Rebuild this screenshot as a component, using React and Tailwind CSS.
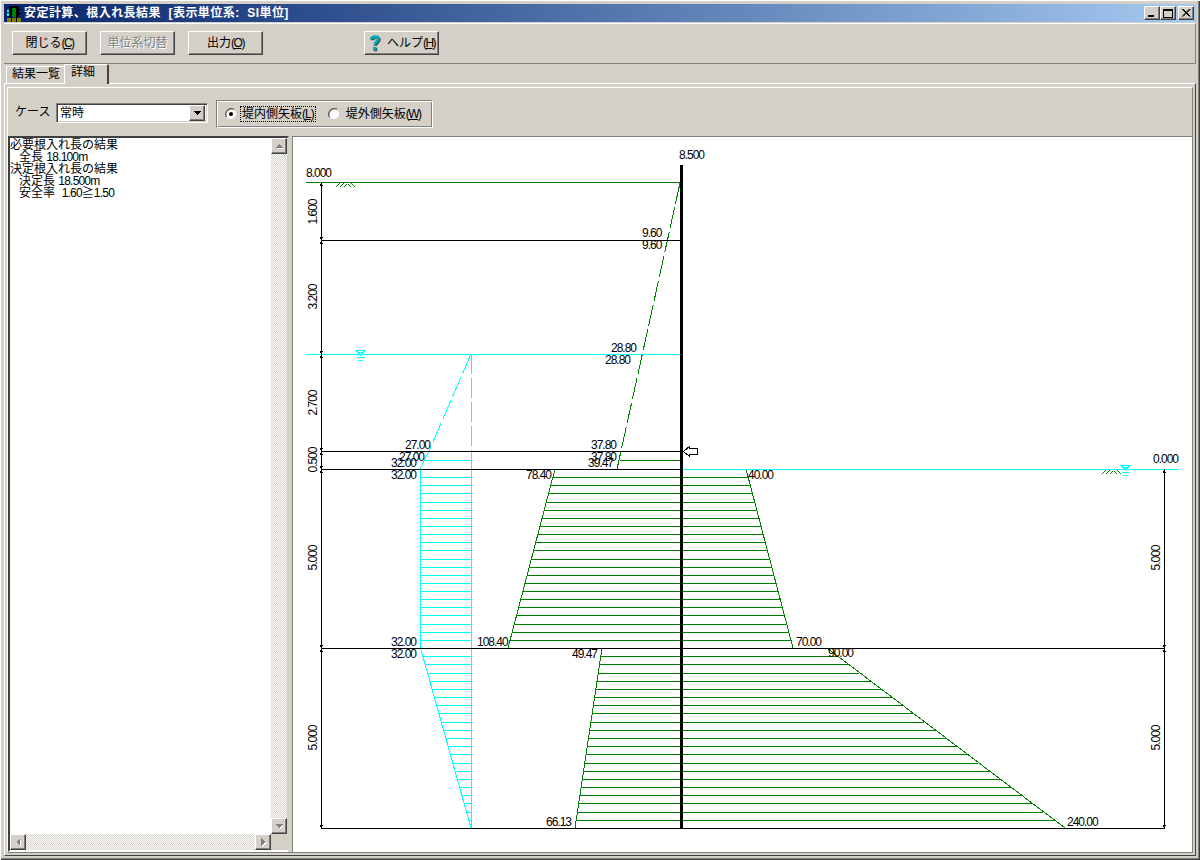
import React from "react";

const jp = "font-['Liberation_Sans','Noto_Sans_CJK_JP',sans-serif]";
const raised = "border border-t-white border-l-white border-r-[#404040] border-b-[#404040] shadow-[inset_-1px_-1px_0_#808080] bg-[#d4d0c8]";
const GREEN = "#008000";
const CYAN = "#00ffff";

function Btn({ label, hot, disabled, className = "", children }) {
  return (
    <button className={`h-6 flex items-center justify-center text-[12px] leading-none ${raised} ${disabled ? "text-[#808080] [text-shadow:1px_1px_0_#ffffff]" : "text-black"} ${className}`}>
      {children}
      {label}
      {hot && (
        <span className="tracking-[-1.5px]">
          (<span className="underline">{hot}</span>)
        </span>
      )}
    </button>
  );
}

function Tri({ dir, color = "#000", shadow }) {
  const pts = {
    up: "0,6 4,2 8,6",
    down: "0,2 8,2 4,6",
    left: "6,0 6,8 2,4",
    right: "2,0 2,8 6,4",
  }[dir];
  return (
    <svg width="8" height="8" viewBox="0 0 8 8" shapeRendering="crispEdges" className="block">
      {shadow && <polygon points={pts} fill={shadow} transform="translate(1,1)" />}
      <polygon points={pts} fill={color} />
    </svg>
  );
}

function SB({ dir, className = "" }) {
  return (
    <div className={`w-4 h-4 shrink-0 flex items-center justify-center ${raised} ${className}`}>
      <Tri dir={dir} color="#808080" shadow="#ffffff" />
    </div>
  );
}

const dither = "bg-[repeating-conic-gradient(#ffffff_0_25%,#d4d0c8_0_50%)] bg-size-[2px_2px]";

function Radio({ checked }) {
  return (
    <svg width="12" height="12" viewBox="0 0 12 12" className="block shrink-0">
      <circle cx="6" cy="6" r="5.5" fill="#fff" stroke="#d4d0c8" />
      <path d="M1.5 9 A5.5 5.5 0 0 1 9 1.5" fill="none" stroke="#606060" strokeWidth="1.4" />
      {checked && <circle cx="6" cy="6" r="2" fill="#000" />}
    </svg>
  );
}

function HelpIcon() {
  return (
    <svg width="14" height="18" viewBox="0 0 14 18" className="block mr-[5px]">
      <path d="M3.5 5.5 C3.5 2.5 10.5 1.5 10.5 5 C10.5 7.5 6.8 7.5 6.8 11" fill="none" stroke="#404040" strokeWidth="3" transform="translate(0.8,0.8)" />
      <rect x="5.8" y="13.8" width="3.4" height="3.4" fill="#404040" />
      <path d="M3.5 5.5 C3.5 2.5 10.5 1.5 10.5 5 C10.5 7.5 6.8 7.5 6.8 11" fill="none" stroke="#00a8b8" strokeWidth="3" />
      <rect x="5" y="13" width="3.4" height="3.4" fill="#00a8b8" />
    </svg>
  );
}

function AppIcon() {
  return (
    <svg width="14" height="16" viewBox="0 0 14 16" shapeRendering="crispEdges" className="block">
      <rect x="2" y="0" width="10" height="11" fill="#000" />
      <rect x="5" y="2" width="4" height="9" fill="#008000" />
      <rect x="0" y="4" width="2" height="2" fill="#00ffff" />
      <rect x="0" y="7" width="2" height="3" fill="#00ffff" />
      <rect x="12" y="3" width="2" height="1" fill="#000" />
      <rect x="12" y="7" width="2" height="1" fill="#000" />
      <rect x="0" y="12" width="14" height="4" fill="#808000" />
      <rect x="4" y="11" width="1" height="5" fill="#000" />
      <rect x="9" y="11" width="1" height="5" fill="#000" />
    </svg>
  );
}

function WinBtn({ type, className = "" }) {
  return (
    <div className={`w-4 h-[14px] ${raised} flex items-center justify-center ${className}`}>
      <svg width="12" height="10" viewBox="0 0 12 10" shapeRendering="crispEdges" className="block">
        {type === "min" && <rect x="2" y="7" width="6" height="2" fill="#000" />}
        {type === "max" && <path d="M1.5 1.5H10.5V9.5H1.5Z" fill="none" stroke="#000" strokeWidth="1" />}
        {type === "max" && <rect x="1" y="0.5" width="10" height="2" fill="#000" />}
        {type === "close" && <path d="M2 1 L9.5 8.5 M3 1 L10.5 8.5 M9.5 1 L2 8.5 M10.5 1 L3 8.5" stroke="#000" strokeWidth="1" shapeRendering="auto" />}
      </svg>
    </div>
  );
}

/* ---------- diagram helpers ---------- */
const L = ({ x1, y1, x2, y2, c = "#000", d }) => (
  <line x1={x1} y1={y1} x2={x2} y2={y2} stroke={c} strokeWidth="1" strokeDasharray={d} />
);
const H = ({ y, x1, x2, c = "#000" }) => <L x1={x1} y1={y + 0.5} x2={x2} y2={y + 0.5} c={c} />;
const lerp = (a, b, t) => a + (b - a) * t;

function hatch(y0, y1, l0, l1, r0, r1, n, c) {
  const out = [];
  for (let i = 1; i < n; i++) {
    const t = i / n;
    const y = Math.round(lerp(y0, y1, t));
    out.push(<H key={`${y0}-${i}-${c}`} y={y} x1={lerp(l0, l1, t)} x2={lerp(r0, r1, t)} c={c} />);
  }
  return out;
}

const T = ({ x, y, children }) => (
  <text x={x} y={y} fill="#000">{children}</text>
);
const V = ({ x, y, children }) => (
  <text x={x} y={y} fill="#000" textAnchor="middle" transform={`rotate(-90 ${x} ${y})`}>{children}</text>
);

function Ground({ x, y }) {
  const segs = [[0, 4, 4, 0], [4, 4, 8, 0], [8, 4, 11, 1], [12, 1, 15, 4], [15, 0, 19, 4]];
  return (
    <g shapeRendering="crispEdges">
      {segs.map((s, i) => (
        <line key={i} x1={x + s[0]} y1={y + s[1]} x2={x + s[2]} y2={y + s[3]} stroke={GREEN} strokeWidth="1" />
      ))}
    </g>
  );
}

function Water({ cx, y }) {
  return (
    <g shapeRendering="crispEdges">
      <polygon points={`${cx - 4.5},${y + 0.5} ${cx + 4.5},${y + 0.5} ${cx},${y + 5}`} fill="none" stroke={CYAN} strokeWidth="1" />
      <line x1={cx - 3.5} y1={y + 2.5} x2={cx + 3.5} y2={y + 2.5} stroke={CYAN} />
      <line x1={cx - 4} y1={y + 7.5} x2={cx + 4} y2={y + 7.5} stroke={CYAN} />
      <line x1={cx - 2.5} y1={y + 10.5} x2={cx + 2.5} y2={y + 10.5} stroke={CYAN} />
    </g>
  );
}

function Ticks({ x, y, up = true, down = true }) {
  return (
    <g fill="#000" shapeRendering="crispEdges">
      {down && <polygon points={`${x + 0.5},${y} ${x - 1.5},${y - 3} ${x + 2.5},${y - 3}`} />}
      {up && <polygon points={`${x + 0.5},${y + 1} ${x - 1.5},${y + 4} ${x + 2.5},${y + 4}`} />}
    </g>
  );
}

function Diagram() {
  return (
    <svg width="899" height="715" viewBox="293 137 899 715" className="block">
      <g shapeRendering="crispEdges">
        {/* cyan */}
        <L x1={471} y1={354} x2={429} y2={451} c={CYAN} d="21 4" />
        <L x1={429} y1={451} x2={420} y2={469} c={CYAN} />
        <L x1={471.5} y1={354} x2={471.5} y2={451} c={CYAN} d="20 4" />
        <L x1={471.5} y1={451} x2={471.5} y2={828} c={CYAN} />
        <L x1={420.5} y1={469} x2={420.5} y2={648} c={CYAN} />
        <L x1={420.5} y1={648} x2={471} y2={828} c={CYAN} />
        <H y={460} x1={424} x2={471} c={CYAN} />
        {hatch(469, 648, 420, 420, 471, 471, 22, CYAN)}
        {hatch(648, 828, 420, 471, 471, 471, 22, CYAN)}

        {/* green */}
        <L x1={680} y1={183} x2={621} y2={451} c={GREEN} d="21 4" />
        <L x1={621} y1={451} x2={617} y2={469} c={GREEN} />
        <H y={460} x1={620} x2={680} c={GREEN} />
        <L x1={555} y1={469} x2={508} y2={648} c={GREEN} />
        <L x1={746} y1={469} x2={793} y2={648} c={GREEN} />
        {hatch(469, 648, 555, 508, 746, 793, 22, GREEN)}
        <L x1={602} y1={648} x2={575} y2={828} c={GREEN} />
        <L x1={827} y1={648} x2={1065} y2={828} c={GREEN} />
        {hatch(648, 828, 602, 575, 827, 1065, 22, GREEN)}

        {/* levels */}
        <H y={182} x1={306} x2={680} c={GREEN} />
        <H y={240} x1={321} x2={680} />
        <H y={354} x1={306} x2={680} c={CYAN} />
        <H y={451} x1={321} x2={680} />
        <H y={469} x1={321} x2={680} />
        <H y={469} x1={683} x2={1179} c={CYAN} />
        <H y={648} x1={321} x2={1165} />
        <H y={828} x1={321} x2={1165} />

        {/* dimension lines */}
        <L x1={321.5} y1={183} x2={321.5} y2={828} />
        <L x1={1164.5} y1={469} x2={1164.5} y2={828} />
      </g>

      <Ticks x={321} y={182} down={false} />
      <Ticks x={321} y={240} />
      <Ticks x={321} y={354} />
      <Ticks x={321} y={451} />
      <Ticks x={321} y={469} />
      <Ticks x={321} y={648} />
      <Ticks x={321} y={828} up={false} />
      <Ticks x={1164} y={469} down={false} />
      <Ticks x={1164} y={648} />
      <Ticks x={1164} y={828} up={false} />

      <rect x="680" y="165" width="3" height="663" fill="#000" />

      <Ground x={336} y={183} />
      <Ground x={1102} y={470} />
      <Water cx={360.5} y={350} />
      <Water cx={1125.5} y={465} />

      <polygon points="683.5,451.5 689.5,446.5 689.5,448.5 697.5,448.5 697.5,454.5 689.5,454.5 689.5,456.5" fill="#fff" stroke="#000" strokeWidth="1" shapeRendering="crispEdges" />

      <g className="font-['Liberation_Sans',sans-serif] text-[12px] tracking-[-1px]">
        <T x={306} y={177}>8.000</T>
        <T x={679} y={159}>8.500</T>
        <T x={642} y={237}>9.60</T>
        <T x={642} y={249}>9.60</T>
        <T x={611} y={352}>28.80</T>
        <T x={605} y={364}>28.80</T>
        <T x={405} y={449}>27.00</T>
        <T x={399} y={461}>27.00</T>
        <T x={391} y={467}>32.00</T>
        <T x={391} y={479}>32.00</T>
        <T x={591} y={449}>37.80</T>
        <T x={591} y={461}>37.80</T>
        <T x={588} y={467}>39.47</T>
        <T x={526} y={479}>78.40</T>
        <T x={748} y={479}>40.00</T>
        <T x={391} y={646}>32.00</T>
        <T x={391} y={658}>32.00</T>
        <T x={477} y={646}>108.40</T>
        <T x={572} y={658}>49.47</T>
        <T x={796} y={646}>70.00</T>
        <T x={828} y={657}>90.00</T>
        <T x={546} y={826}>66.13</T>
        <T x={1067} y={826}>240.00</T>
        <T x={1153} y={463}>0.000</T>
        <V x={317} y={212}>1.600</V>
        <V x={317} y={297}>3.200</V>
        <V x={317} y={403}>2.700</V>
        <V x={317} y={460}>0.500</V>
        <V x={317} y={558}>5.000</V>
        <V x={317} y={738}>5.000</V>
        <V x={1160} y={558}>5.000</V>
        <V x={1160} y={738}>5.000</V>
      </g>
    </svg>
  );
}

const N = ({ children }) => <span className="tracking-[-0.8px]">{children}</span>;

export default function App() {
  return (
    <div className={`w-[1200px] h-[860px] overflow-hidden bg-[#d4d0c8] p-1 flex flex-col text-black ${jp} shadow-[inset_1px_1px_0_#ffffff,inset_-1px_-1px_0_#404040,inset_-2px_-2px_0_#808080]`}>
      {/* title bar */}
      <div className="h-[18px] shrink-0 flex items-center bg-linear-to-r from-[#0a246a] to-[#a6caf0]">
        <div className="ml-[3px] mr-[3px] mt-px"><AppIcon /></div>
        <span className="text-white font-bold text-[12px] leading-none tracking-[0.45px] whitespace-pre">安定計算、根入れ長結果  [表示単位系:  SI単位]</span>
        <div className="ml-auto mr-0.5 flex">
          <WinBtn type="min" />
          <WinBtn type="max" />
          <WinBtn type="close" className="ml-0.5" />
        </div>
      </div>

      {/* toolbar */}
      <div className="mt-px h-[41px] shrink-0 border-t border-t-white border-b border-b-[#808080] border-r border-r-[#808080] pl-2 pt-[7px] flex">
        <Btn label="閉じる" hot="C" className="w-[75px]" />
        <Btn label="単位系切替" disabled className="w-[75px] ml-[13px]" />
        <Btn label="出力" hot="O" className="w-[75px] ml-[13px]" />
        <Btn label="ヘルプ" hot="H" className="w-[75px] ml-[101px]"><HelpIcon /></Btn>
      </div>

      {/* tabs */}
      <div className="h-[19px] shrink-0 flex items-end pl-0.5 relative z-10">
        <div className="h-[17px] w-[58px] border-t border-l border-white rounded-tl-[2px] text-[12px] leading-[15px] pl-[5px] whitespace-nowrap">結果一覧</div>
        <div className="h-5 w-[45px] -mb-px bg-[#d4d0c8] border-t border-l border-white border-r-2 border-r-[#404040] rounded-t-[2px] text-[12px] leading-[15px] pl-[6px]">詳細</div>
      </div>

      {/* tab page */}
      <div className="flex-1 min-h-0 flex flex-col border border-t-white border-l-white border-r-[#404040] border-b-[#404040] pt-[3px] pl-0.5 pr-0.5 pb-0.5">
        <div className="flex-1 min-h-0 flex flex-col border border-t-white border-l-white border-r-[#808080] border-b-[#808080]">
          {/* filter row */}
          <div className="h-[47px] shrink-0 flex items-start">
            <span className="ml-[7px] mt-[16px] text-[12px] leading-[16px] w-[41px] whitespace-nowrap">ケース</span>
            <div className="mt-[15px] w-[152px] h-5 bg-white border border-t-[#808080] border-l-[#808080] border-r-white border-b-white flex items-center shadow-[inset_1px_1px_0_#404040,inset_-1px_-1px_0_#d4d0c8]">
              <span className="ml-[3px] text-[12px] leading-none">常時</span>
              <div className={`ml-auto mr-0.5 w-4 h-4 flex items-center justify-center ${raised}`}>
                <Tri dir="down" />
              </div>
            </div>
            <div className="ml-2 mt-3 w-[217px] h-[28px] flex items-center border border-t-[#808080] border-l-[#808080] border-r-white border-b-white shadow-[inset_1px_1px_0_#ffffff,inset_-1px_-1px_0_#808080] text-[12px] leading-none">
              <span className="ml-2"><Radio checked /></span>
              <span className="ml-[3px] h-4 px-px flex items-center border border-dotted border-black whitespace-nowrap">
                堤内側矢板<span className="tracking-[-1px]">(<span className="underline">L</span>)</span>
              </span>
              <span className="ml-3"><Radio /></span>
              <span className="ml-[6px] whitespace-nowrap">
                堤外側矢板<span className="tracking-[-1.5px]">(<span className="underline">W</span>)</span>
              </span>
            </div>
          </div>

          {/* panes */}
          <div className="flex-1 min-h-0 pt-px flex">
            {/* left list */}
            <div className="w-[281px] shrink-0 border-2 border-t-[#404040] border-l-[#404040] border-r-[#d4d0c8] border-b-white flex flex-col">
              <div className="flex-1 min-h-0 flex">
                <div className="flex-1 bg-white text-[12px] leading-[12px] pt-px whitespace-pre">
                  <div>必要根入れ長の結果</div>
                  <div className="pl-[9px]">全長 <N>18.100m</N></div>
                  <div>決定根入れ長の結果</div>
                  <div className="pl-[9px]">決定長 <N>18.500m</N></div>
                  <div className="pl-[9px]">安全率  <N>1.60</N>≧<N>1.50</N></div>
                </div>
                <div className={`w-4 shrink-0 flex flex-col ${dither}`}>
                  <SB dir="up" />
                  <div className="flex-1" />
                  <SB dir="down" />
                </div>
              </div>
              <div className="h-4 shrink-0 flex">
                <div className={`flex-1 flex ${dither}`}>
                  <SB dir="left" />
                  <div className="flex-1" />
                  <SB dir="right" />
                </div>
                <div className="w-4 shrink-0 bg-[#d4d0c8]" />
              </div>
            </div>

            {/* right canvas */}
            <div className="ml-[3px] flex-1 min-w-0 bg-white border-l border-t border-[#808080] overflow-hidden">
              <Diagram />
            </div>
          </div>
        </div>
      </div>
    </div>
  );
}
